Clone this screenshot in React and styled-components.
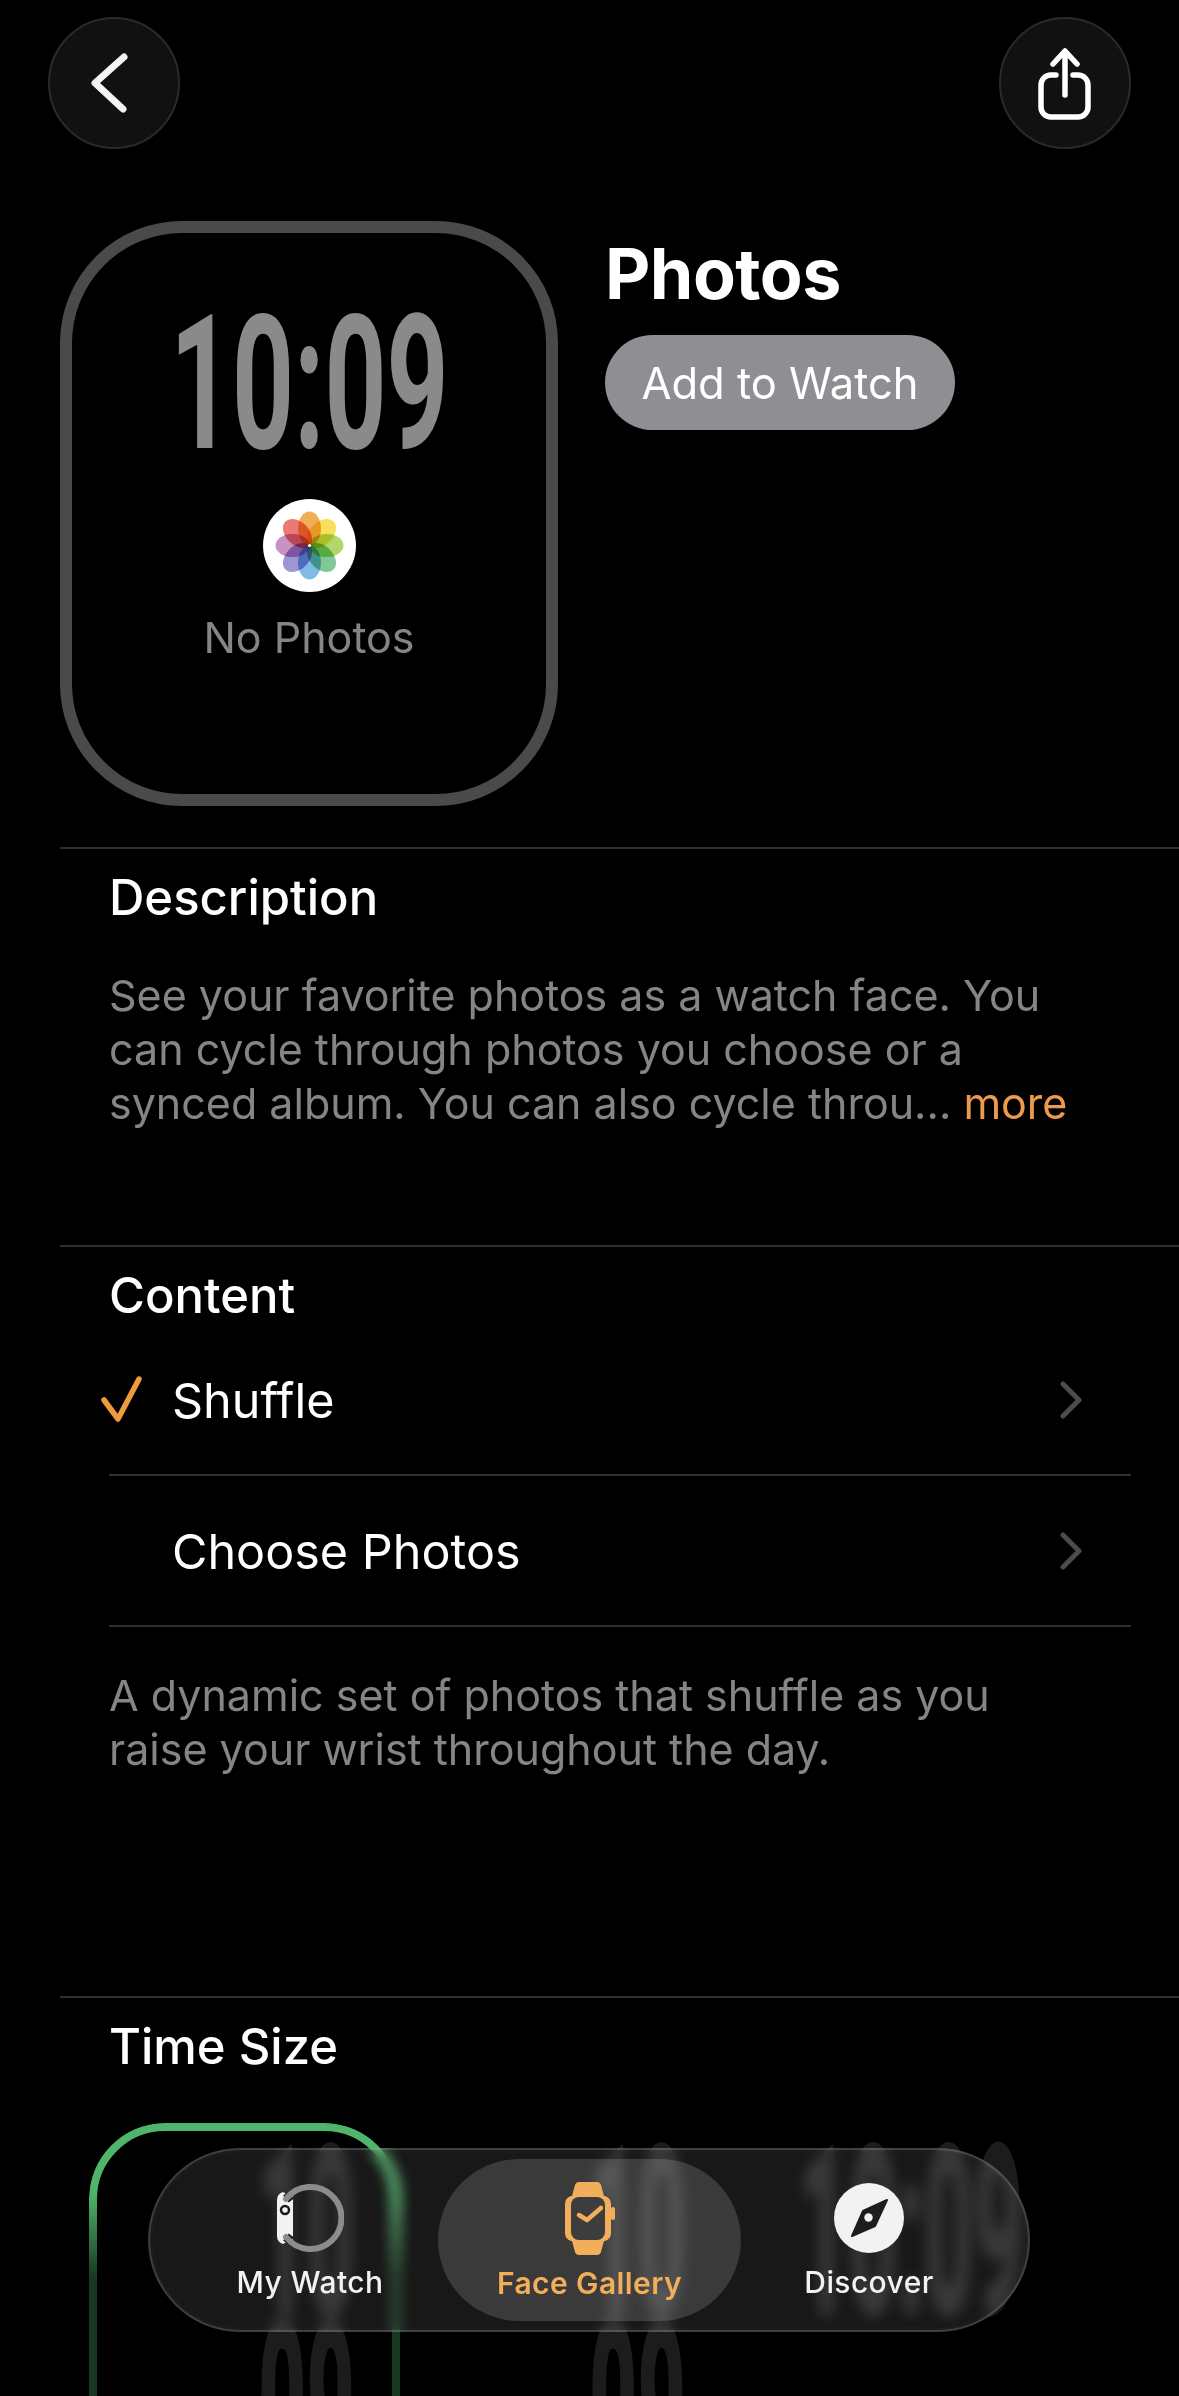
import React from "react";
import styled, { createGlobalStyle } from "styled-components";

const orange = "#f2ae5a";

const GlobalStyle = createGlobalStyle`
  html, body {
    margin: 0;
    padding: 0;
    background: #000;
    font-family: "Inter", "Liberation Sans", sans-serif;
  }
`;

const Page = styled.div`
  position: relative;
  width: 1179px;
  height: 2396px;
  overflow: hidden;
  background: #000;
  color: #fff;
`;

const TopBar = styled.div`
  display: flex;
  justify-content: space-between;
  padding: 17px 48px 0;
`;

const RoundButton = styled.div`
  width: 132px;
  height: 132px;
  box-sizing: border-box;
  border-radius: 50%;
  background: #111;
  border: 2px solid #2a2a2a;
  svg {
    display: block;
    margin: -2px;
  }
`;

const Hero = styled.div`
  display: flex;
  gap: 47px;
  padding: 72px 0 0 60px;
  height: 698px;
  box-sizing: border-box;
`;

const WatchCase = styled.div`
  width: 498px;
  height: 585px;
  box-sizing: border-box;
  border: 12px solid #4a4a4a;
  border-radius: 122px;
  display: flex;
  flex-direction: column;
  align-items: center;
  padding-top: 83px;
`;

const BigTime = styled.div`
  height: 136px;
  line-height: 136px;
  font-family: "Roboto", sans-serif;
  font-weight: 700;
  font-size: 188px;
  color: #8a8a8a;
  white-space: nowrap;
  transform: scaleX(0.575);
`;

const PhotosIcon = styled.svg`
  display: block;
  margin-top: 47px;
`;

const Petal = styled.ellipse`
  mix-blend-mode: multiply;
  opacity: 0.88;
`;

const NoPhotos = styled.div`
  margin-top: 20px;
  font-size: 43px;
  line-height: 50px;
  color: #858588;
`;

const HeroInfo = styled.div`
  display: flex;
  flex-direction: column;
  align-items: flex-start;
  padding-top: 13px;
`;

const Title = styled.h1`
  margin: 0;
  font-size: 70px;
  line-height: 80px;
  font-weight: 700;
  letter-spacing: -0.5px;
`;

const AddButton = styled.div`
  margin-top: 21px;
  width: 350px;
  height: 95px;
  border-radius: 48px;
  background: #8e8e93;
  display: flex;
  align-items: center;
  justify-content: center;
  font-size: 43.5px;
`;

const Section = styled.section`
  margin-left: 60px;
  border-top: 2px solid #2e2e2e;
  box-sizing: border-box;
  height: ${(p) => p.$height}px;
  padding: 24px 48px 0 49px;
`;

const Heading = styled.h2`
  margin: 0;
  font-size: 49px;
  line-height: 50px;
  font-weight: 500;
`;

const Body = styled.p`
  margin: ${(p) => p.$top}px 0 0;
  font-size: 43px;
  line-height: 54px;
  color: #858588;
  span {
    display: block;
    white-space: nowrap;
  }
  b {
    font-weight: 400;
    color: #ee9a4d;
  }
`;

const Rows = styled.div`
  margin-top: 4px;
`;

const Row = styled.div`
  display: flex;
  align-items: center;
  height: 151px;
  box-sizing: border-box;
  border-bottom: 2px solid #2e2e2e;
  padding-right: 48px;
  font-size: 48.5px;
`;

const CheckSlot = styled.div`
  width: 63px;
  flex: none;
  svg {
    display: block;
    margin-left: -8px;
  }
`;

const RowLabel = styled.div`
  flex: 1;
  padding-top: 2px;
`;

const FaceRow = styled.div`
  display: flex;
  gap: 20px;
  margin: 51px 0 0 -20px;
`;

const Face = styled.div`
  position: relative;
  flex: none;
  width: 311px;
  height: 480px;
  box-sizing: border-box;
  padding: 25px 0 0 ${(p) => p.$indent}px;
  display: flex;
  flex-direction: column;
  align-items: center;
  gap: 6px;

  &::before {
    content: "";
    display: ${(p) => (p.$selected ? "block" : "none")};
    position: absolute;
    inset: 0;
    border: 8px solid #4fb56a;
    border-radius: 76px;
    mask-image: linear-gradient(
      to bottom,
      #000 70px,
      rgba(0, 0, 0, 0.3) 155px,
      rgba(0, 0, 0, 0.3) 100%
    );
  }
`;

const FaceDigits = styled.div`
  height: 170px;
  line-height: 170px;
  font-family: "Roboto", sans-serif;
  font-weight: 900;
  font-size: 239px;
  color: #1c1c1c;
  white-space: nowrap;
  transform: scaleX(${(p) => p.$squeeze});
`;

const TabBar = styled.nav`
  position: absolute;
  left: 148px;
  top: 2148px;
  width: 882px;
  height: 184px;
  box-sizing: border-box;
  border-radius: 92px;
  border: 2px solid rgba(255, 255, 255, 0.17);
  background: rgba(255, 255, 255, 0.095);
  backdrop-filter: blur(7px) brightness(1.35);
  box-shadow: inset 0 0 6px rgba(255, 255, 255, 0.06);
  display: flex;
  gap: 4px;
  padding: 9px 36px;
`;

const Tab = styled.div`
  flex: none;
  width: ${(p) => (p.$active ? 303 : 248)}px;
  height: 162px;
  box-sizing: border-box;
  padding-top: 23px;
  border-radius: 81px;
  background: ${(p) => (p.$active ? "rgba(255, 255, 255, 0.15)" : "transparent")};
  color: ${(p) => (p.$active ? orange : "#f2f2f2")};
  display: flex;
  flex-direction: column;
  align-items: center;
  svg {
    display: block;
  }
`;

const TabLabel = styled.div`
  margin-top: 10px;
  font-size: 30px;
  line-height: 36px;
  font-weight: ${(p) => (p.$active ? 600 : 500)};
  letter-spacing: 0.4px;
  white-space: nowrap;
`;

const petals = [
  ["#f0a33f", 0],
  ["#f5dc45", 45],
  ["#a6d256", 90],
  ["#6fc08a", 135],
  ["#6eb2e3", 180],
  ["#9186cc", 225],
  ["#c283bd", 270],
  ["#ea6660", 315],
];

const BackIcon = () => (
  <svg width="132" height="132" viewBox="0 0 132 132" fill="none">
    <path d="M76 40 47 66 75 92" stroke="#f4f4f4" strokeWidth="7" strokeLinecap="round" strokeLinejoin="round" />
  </svg>
);

const ShareIcon = () => (
  <svg width="132" height="132" viewBox="0 0 132 132" fill="none" stroke="#fff" strokeWidth="5.5" strokeLinecap="round" strokeLinejoin="round">
    <path d="M57 58h-5a10 10 0 0 0-10 10v22a10 10 0 0 0 10 10h27a10 10 0 0 0 10-10V68a10 10 0 0 0-10-10h-5" />
    <path d="M66 35v43M54 47l12-13 12 13" />
  </svg>
);

const PhotosFlower = () => (
  <PhotosIcon width="93" height="93" viewBox="0 0 93 93">
    <circle cx="46.5" cy="46.5" r="46.5" fill="#fff" />
    {petals.map(([color, angle]) => (
      <Petal
        key={angle}
        cx="46.5"
        cy="29.5"
        rx="11.5"
        ry="17"
        fill={color}
        transform={`rotate(${angle} 46.5 46.5)`}
      />
    ))}
    <circle cx="46.5" cy="46.5" r="1.6" fill="#fff" />
  </PhotosIcon>
);

const CheckIcon = () => (
  <svg width="46" height="48" viewBox="0 0 46 48" fill="none">
    <path d="M3 24 17 43 38 3" stroke="#f09a3e" strokeWidth="5.5" strokeLinecap="round" strokeLinejoin="round" />
  </svg>
);

const ChevronIcon = () => (
  <svg width="24" height="38" viewBox="0 0 24 38" fill="none">
    <path d="M4 3 20 19 4 35" stroke="#4c4c4e" strokeWidth="5" strokeLinecap="round" strokeLinejoin="round" />
  </svg>
);

const MyWatchIcon = () => (
  <svg width="67" height="72" viewBox="0 0 67 72" fill="none">
    <path d="M6 10 13 14H16V58H13L6 62Q0 60 0 54V18Q0 12 6 10Z" fill="#f2f2f2" />
    <circle cx="8" cy="28" r="4" fill="#f2f2f2" stroke="#1a1a1a" strokeWidth="2.5" />
    <path d="M9 17 14 13M9 55 14 59" stroke="#1a1a1a" strokeWidth="9" />
    <path d="M9 17A31 31 0 1 1 9 55" stroke="#8c8c8c" strokeWidth="6" strokeLinecap="round" />
  </svg>
);

const FaceGalleryIcon = () => (
  <svg width="50" height="73" viewBox="0 0 50 73" fill="none">
    <path d="M14 0H32Q35 0 36 3L39 14H40Q46 16 46 22V51Q46 57 40 59H39L36 70Q35 73 32 73H14Q11 73 10 70L7 59H6Q0 57 0 51V22Q0 16 6 14H7L10 3Q11 0 14 0Z" fill={orange} />
    <rect x="46" y="25" width="4" height="13" rx="2" fill={orange} />
    <rect x="6" y="15" width="34" height="43" rx="8" fill="#3d3d3d" />
    <path d="M14 33 22 38 36 26" stroke={orange} strokeWidth="4.5" strokeLinecap="round" strokeLinejoin="round" />
  </svg>
);

const DiscoverIcon = () => (
  <svg width="70" height="72" viewBox="0 0 70 72">
    <circle cx="35" cy="36" r="35" fill="#f2f2f2" />
    <path d="M53 18 41 44 18 54 29 29Z" fill="#1d1d1d" stroke="#1d1d1d" strokeWidth="2" strokeLinejoin="round" />
    <circle cx="34.5" cy="35.5" r="4.2" fill="#f2f2f2" />
  </svg>
);

const App = () => {
  return (
    <Page>
      <GlobalStyle />
      <TopBar>
        <RoundButton>
          <BackIcon />
        </RoundButton>
        <RoundButton>
          <ShareIcon />
        </RoundButton>
      </TopBar>

      <Hero>
        <WatchCase>
          <BigTime>10:09</BigTime>
          <PhotosFlower />
          <NoPhotos>No Photos</NoPhotos>
        </WatchCase>
        <HeroInfo>
          <Title>Photos</Title>
          <AddButton>Add to Watch</AddButton>
        </HeroInfo>
      </Hero>

      <Section $height={398}>
        <Heading>Description</Heading>
        <Body $top={45}>
          <span>See your favorite photos as a watch face. You</span>
          <span>can cycle through photos you choose or a</span>
          <span>
            synced album. You can also cycle throu... <b>more</b>
          </span>
        </Body>
      </Section>

      <Section $height={751}>
        <Heading>Content</Heading>
        <Rows>
          <Row>
            <CheckSlot>
              <CheckIcon />
            </CheckSlot>
            <RowLabel>Shuffle</RowLabel>
            <ChevronIcon />
          </Row>
          <Row>
            <CheckSlot />
            <RowLabel>Choose Photos</RowLabel>
            <ChevronIcon />
          </Row>
        </Rows>
        <Body $top={41}>
          <span>A dynamic set of photos that shuffle as you</span>
          <span>raise your wrist throughout the day.</span>
        </Body>
      </Section>

      <Section $height={400}>
        <Heading>Time Size</Heading>
        <FaceRow>
          <Face $selected $indent={124}>
            <FaceDigits $squeeze={0.35}>10</FaceDigits>
            <FaceDigits $squeeze={0.35}>09</FaceDigits>
          </Face>
          <Face $indent={124}>
            <FaceDigits $squeeze={0.35}>10</FaceDigits>
            <FaceDigits $squeeze={0.35}>09</FaceDigits>
          </Face>
          <Face $indent={8}>
            <FaceDigits $squeeze={0.36}>10:09</FaceDigits>
          </Face>
        </FaceRow>
      </Section>

      <TabBar>
        <Tab>
          <MyWatchIcon />
          <TabLabel>My Watch</TabLabel>
        </Tab>
        <Tab $active>
          <FaceGalleryIcon />
          <TabLabel $active>Face Gallery</TabLabel>
        </Tab>
        <Tab>
          <DiscoverIcon />
          <TabLabel>Discover</TabLabel>
        </Tab>
      </TabBar>
    </Page>
  );
};

export default App;
